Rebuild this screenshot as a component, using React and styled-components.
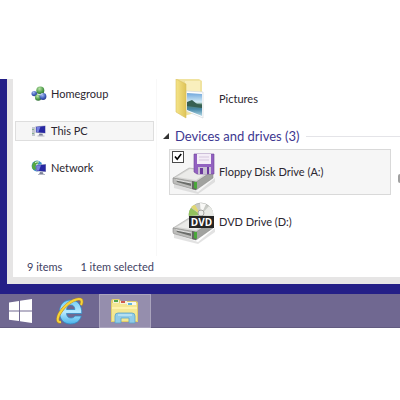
import React from "react";
import styled, { createGlobalStyle } from "styled-components";

const GlobalStyle = createGlobalStyle`
  * { box-sizing: border-box; }
  body {
    margin: 0;
    background: #fff;
    color: #2b2630;
    font: 11px/16px Lato, "Open Sans", sans-serif;
  }
  button { font: inherit; color: inherit; }
`;

const Page = styled.div`
  padding-top: 79px;
  overflow: hidden;
`;

const Desktop = styled.div`
  background: #241f87;
  padding: 0 0 10px 7px;
`;

const Window = styled.div`
  background: #fff;
  border: solid #e6e5e5;
  border-width: 0 0 7px 6px;
`;

const Body = styled.div`
  display: flex;
  height: 177px;
`;

const Sidebar = styled.nav`
  display: flex;
  flex-direction: column;
  flex: none;
  gap: 17px;
  width: 144px;
  padding: 5px 2px;
  border-right: 1px solid #f8f8f8;
`;

const NavLink = styled.a`
  display: flex;
  align-items: center;
  gap: 4px;
  height: 20px;
  padding-left: 15px;
  border: 1px solid ${(p) => (p.$selected ? "#dedede" : "transparent")};
  background: ${(p) => (p.$selected ? "#f6f6f6" : "transparent")};
  color: inherit;
  text-decoration: none;
  svg { flex: none; }
`;

const Content = styled.main`
  flex: 1;
  min-width: 0;
  padding-left: 6px;
`;

const FolderRow = styled.a`
  display: flex;
  align-items: center;
  gap: 8px;
  height: 40px;
  padding-left: 12px;
  color: inherit;
  text-decoration: none;
`;

const GroupHeader = styled.h2`
  display: flex;
  align-items: center;
  gap: 6px;
  height: 30px;
  margin: 0;
  padding-top: 4px;
  color: #3d3790;
  font-size: 13px;
  font-weight: 400;
  &::after {
    content: "";
    flex: 1;
    border-top: 1px solid #e4e4e8;
  }
`;

const DriveGrid = styled.div`
  display: grid;
  grid-template-columns: minmax(0, 1fr) 2px;
  gap: 4px 7px;
  padding-left: 6px;
`;

const Tile = styled.div`
  position: relative;
  display: flex;
  align-items: center;
  gap: 4px;
  height: 46px;
  padding-left: 2px;
  border: 1px solid ${(p) => (p.$selected ? "#d9d9d9" : "transparent")};
  background: ${(p) => (p.$selected ? "#f6f6f6" : "transparent")};
`;

const PartialTile = styled.div`
  display: flex;
  align-items: center;
  overflow: hidden;
  padding-top: 14px;
`;

const Check = styled.input`
  appearance: none;
  position: absolute;
  top: 1px;
  left: 2px;
  width: 12px;
  height: 12px;
  margin: 0;
  border: 1px solid #4a4a4a;
  background: #fff;
  &:checked {
    background: #fff
      url("data:image/svg+xml,%3Csvg xmlns='http://www.w3.org/2000/svg' viewBox='0 0 10 10'%3E%3Cpath d='M2 4.5 4.2 7.3 8.2 2' fill='none' stroke='%23000' stroke-width='1.6'/%3E%3C/svg%3E")
      center / 10px no-repeat;
  }
`;

const StatusBar = styled.footer`
  display: flex;
  align-items: center;
  gap: 18px;
  height: 21px;
  padding-left: 14px;
  color: #414263;
`;

const Taskbar = styled.div`
  display: flex;
  height: 34px;
  background: #706891;
  border-bottom: 1px solid #625b80;
`;

const TaskButton = styled.button`
  display: grid;
  place-items: center;
  width: ${(p) => p.$width}px;
  height: 34px;
  margin: 0;
  padding: 0;
  border: 1px solid ${(p) => (p.$active ? "#aaa4bd" : "transparent")};
  background: ${(p) => (p.$active ? "#958ead" : "transparent")};
`;

function HomegroupIcon() {
  return (
    <svg width="16" height="16" viewBox="0 0 16 16" aria-hidden="true">
      <defs>
        <radialGradient id="hg" cx=".4" cy=".3" r=".8">
          <stop offset="0" stopColor="#b9e3a6" />
          <stop offset=".6" stopColor="#4c9a48" />
          <stop offset="1" stopColor="#27612f" />
        </radialGradient>
        <radialGradient id="hb" cx=".4" cy=".3" r=".8">
          <stop offset="0" stopColor="#a4b9ef" />
          <stop offset=".6" stopColor="#3d5cb9" />
          <stop offset="1" stopColor="#232c7c" />
        </radialGradient>
      </defs>
      <path d="M4 8 9 5l3 7-4-1z" fill="none" stroke="#7a9bb8" strokeWidth="1.5" />
      <circle cx="3.2" cy="7.6" r="2.7" fill="url(#hb)" />
      <circle cx="9.3" cy="4.4" r="4" fill="url(#hg)" />
      <circle cx="7.2" cy="11.5" r="3.2" fill="url(#hg)" />
      <circle cx="12" cy="10.5" r="3.4" fill="url(#hb)" />
      <path d="m6.5 8 3 1 2-2" stroke="#dff0f5" fill="none" />
    </svg>
  );
}

function Monitor({ x, y }) {
  return (
    <g transform={`translate(${x} ${y})`}>
      <path d="m0 .8 10-.8v8L0 7.2z" fill="#aaaec5" />
      <path d="m.6 1.4 9-.8v6.8l-9-.6z" fill="#2727a2" />
      <path d="m1 1.6 4-.3-2 5.2-2-.1z" fill="#7780e1" />
      <path d="m4 8 3 .2.5 2H3z" fill="#7d8299" />
      <path d="M2 10h7v1H2z" fill="#b6b9c6" />
    </g>
  );
}

function PcIcon() {
  return (
    <svg width="16" height="16" viewBox="0 0 16 16" aria-hidden="true">
      <path d="M1 4h3v9H1z" fill="#c4c8cf" />
      <path d="M1.5 6h1v1h-1zm0 4h1v1h-1z" fill="#49984c" />
      <Monitor x={4.5} y={2.5} />
    </svg>
  );
}

function NetworkIcon() {
  return (
    <svg width="16" height="16" viewBox="0 0 16 16" aria-hidden="true">
      <circle cx="6" cy="6" r="5.4" fill="#3b8fca" />
      <path d="M2 3c3-3 5-2 6-1L6 5 4 6l1 3-2 1C0 8 1 5 2 3z" fill="#57a842" />
      <path d="M4 2.5q2-1 4-.5M5 5l2-1" stroke="#dff5f9" fill="none" />
      <Monitor x={5} y={4} />
    </svg>
  );
}

function PicturesIcon() {
  return (
    <svg width="36" height="40" viewBox="0 0 36 40" aria-hidden="true">
      <defs>
        <linearGradient id="fold" x2="1">
          <stop offset="0" stopColor="#f5e488" />
          <stop offset="1" stopColor="#dfc458" />
        </linearGradient>
        <linearGradient id="photo" x2="0" y2="1">
          <stop offset="0" stopColor="#6fa6dc" />
          <stop offset=".4" stopColor="#d5edf6" />
          <stop offset=".5" stopColor="#537f68" />
          <stop offset=".7" stopColor="#4788a8" />
          <stop offset="1" stopColor="#b3d8e5" />
        </linearGradient>
      </defs>
      <path d="M2 0h22l3 2v30L9 37z" fill="#f0e3a0" />
      <path d="M10 2h15v28H10z" fill="#f9efbd" />
      <path d="m11 12 17 1v26l-17-7z" fill="#fff" stroke="#d2d8dc" strokeWidth=".7" />
      <path d="m12 14 15 1v22l-15-6z" fill="url(#photo)" />
      <path d="m12 23 5-2 5 4 5 1v3l-15-2z" fill="#365f52" />
      <path d="m1 0 10 5v34L1 33z" fill="url(#fold)" stroke="#d8bf5c" strokeWidth=".6" />
    </svg>
  );
}

function DriveBase() {
  return (
    <>
      <path d="m2 34 24 8 17-14v4L26 44 2 38z" fill="#c6c6c6" opacity=".5" />
      <path d="m1 28 16-10 24 3-17 12z" fill="#d5d5d3" stroke="#a2a2a0" strokeWidth=".5" />
      <path d="m5 27 13-8 18 3-12 8z" fill="#ebebe9" />
      <path d="m1 28 23 4v8L3 34q-2 0-2-2z" fill="#bdbdbb" stroke="#858583" strokeWidth=".6" />
      <path d="m24 32 17-11v7L24 40z" fill="#a1a29f" stroke="#858583" strokeWidth=".5" />
      <path d="m20 31 4 1v8l-4-1z" fill="#646762" />
      <path d="m22 32 3 0v7l-3-1z" fill="#4aa83b" />
      <path d="m4 30 15 3v3L5 32z" fill="#6b6d6a" />
      <path d="m4 30 15 3" stroke="#f2f2f2" strokeWidth=".8" />
    </>
  );
}

function FloppyIcon() {
  return (
    <svg width="43" height="44" viewBox="0 0 43 44" aria-hidden="true">
      <DriveBase />
      <path d="M22 4h20v20H25l-3-2z" fill="#9261c0" stroke="#704397" strokeWidth=".6" />
      <path d="M25 4h14v10H25z" fill="#f4edf7" />
      <path d="M27 7h10M27 10h10" stroke="#d5c7dd" />
      <path d="M26 17h13v7H26z" fill="#c9c1d3" />
      <path d="M28 18h3v6h-3zM35 17h2v7h-2z" fill="#6c3b9d" />
    </svg>
  );
}

const DvdLabel = styled.text`
  font: 700 10px "Open Sans", sans-serif;
  fill: #fff;
`;

function DvdIcon() {
  return (
    <svg width="43" height="44" viewBox="0 0 43 44" role="img" aria-label="DVD drive">
      <DriveBase />
      <circle cx="29" cy="15" r="12" fill="#c8cac5" stroke="#a5a7a2" strokeWidth=".7" />
      <path d="M29 15 19 8q-3 4-2 8z" fill="#92c35d" />
      <path d="m29 15-6-10q-2 0-4 2z" fill="#e1d870" />
      <path d="m29 15 8-9q5 4 4 10z" fill="#e9eae6" />
      <path d="m29 15-1-12 6 1z" fill="#f8f8f6" />
      <circle cx="29" cy="13" r="3" fill="#ecedeb" stroke="#a5a5a2" />
      <path d="M17 16h25v12H17z" fill="#242424" />
      <DvdLabel x="29.5" y="26" textAnchor="middle">DVD</DvdLabel>
    </svg>
  );
}

function EdgeIcon() {
  return (
    <svg width="2" height="10" viewBox="0 0 2 10" aria-hidden="true">
      <path d="M2 0Q0 0 0 2v5q0 2 2 2z" fill="#a0a0a0" />
    </svg>
  );
}

function StartIcon() {
  return (
    <svg width="24" height="24" viewBox="0 0 24 24" aria-hidden="true">
      <path d="M0 3.5 10 2v9.5H0zM11 1.8 23 0v11.5H11zM0 12.5h10V22L0 20.7zM11 12.5h12V24l-12-1.8z" fill="#fff" />
    </svg>
  );
}

function BrowserIcon() {
  return (
    <svg width="28" height="30" viewBox="0 0 28 30" aria-hidden="true">
      <defs>
        <linearGradient id="ie" x2="0" y2="1">
          <stop offset="0" stopColor="#71cdf8" />
          <stop offset=".5" stopColor="#b9eaff" />
          <stop offset="1" stopColor="#48b2e9" />
        </linearGradient>
      </defs>
      <path
        fillRule="evenodd"
        d="M14.5 4C22 4 26 9.500 25.800 17.500H10.500c.3 3 2 4.500 4.500 4.500 2 0 3.200-.8 3.800-2h6.500C24 25 20 28 14.500 28 7.500 28 3.500 23 3.500 16S7.500 4 14.500 4zM10.600 13.500h8.300c-.2-3-1.700-4.500-4.100-4.500s-3.900 1.500-4.200 4.500z"
        fill="url(#ie)"
        stroke="#3389c4"
        strokeWidth=".8"
      />
      <path d="M5 26C0 27 1 20 6 14 13 5 23 1 25.500 4q1 2-.5 5" fill="none" stroke="#b98a20" strokeWidth="3" />
      <path d="M5 26C0 27 1 20 6 14 13 5 23 1 25.500 4q1 2-.5 5" fill="none" stroke="#f5d43b" strokeWidth="2" />
    </svg>
  );
}

function ExplorerIcon() {
  return (
    <svg width="30" height="28" viewBox="0 0 30 28" aria-hidden="true">
      <path d="M1 5q0-3 2-3h6l2 2h14q3 0 3 2v19H1z" fill="#e3cf69" />
      <path d="M2 6h25v18H2z" fill="#f4e793" />
      <path d="M3 3h6v3H3z" fill="#f5f2d8" />
      <path d="M4 3h4v2H4z" fill="#55a64b" />
      <path d="M10 4h7v3h-7z" fill="#f5f2d8" />
      <path d="M11 4h4v2h-4z" fill="#d05a4c" />
      <path d="M17 5h9v3h-9z" fill="#f5f6f0" />
      <path d="M18 6h4v2h-4z" fill="#5eb5df" />
      <path d="M2 10h25v2H2z" fill="#fff3ad" />
      <path d="M5 26v-7q0-3 3-3h14q3 0 3 3v7h-6v-5h-8v5z" fill="#91cce9" stroke="#5ba4ca" strokeWidth=".8" />
      <path d="M8 18h14" stroke="#d9f3fc" />
    </svg>
  );
}

export default function App() {
  return (
    <Page>
      <GlobalStyle />
      <Desktop>
        <Window>
          <Body>
            <Sidebar aria-label="Locations">
              <NavLink href="#homegroup"><HomegroupIcon />Homegroup</NavLink>
              <NavLink href="#pc" $selected aria-current="page"><PcIcon />This PC</NavLink>
              <NavLink href="#network"><NetworkIcon />Network</NavLink>
            </Sidebar>
            <Content>
              <FolderRow href="#pictures"><PicturesIcon />Pictures</FolderRow>
              <GroupHeader>
                <svg width="6" height="6" viewBox="0 0 6 6" aria-hidden="true">
                  <path d="M6 0v6H0z" fill="#333" />
                </svg>
                Devices and drives (3)
              </GroupHeader>
              <DriveGrid>
                <Tile $selected>
                  <FloppyIcon />
                  <Check type="checkbox" id="floppy" defaultChecked />
                  <label htmlFor="floppy">Floppy Disk Drive (A:)</label>
                </Tile>
                <PartialTile><EdgeIcon /></PartialTile>
                <Tile><DvdIcon />DVD Drive (D:)</Tile>
              </DriveGrid>
            </Content>
          </Body>
          <StatusBar><span>9 items</span><span>1 item selected</span></StatusBar>
        </Window>
      </Desktop>
      <Taskbar>
        <TaskButton $width={41} aria-label="Start"><StartIcon /></TaskButton>
        <TaskButton $width={58} aria-label="Internet Explorer"><BrowserIcon /></TaskButton>
        <TaskButton $width={52} $active aria-label="File Explorer"><ExplorerIcon /></TaskButton>
      </Taskbar>
    </Page>
  );
}
